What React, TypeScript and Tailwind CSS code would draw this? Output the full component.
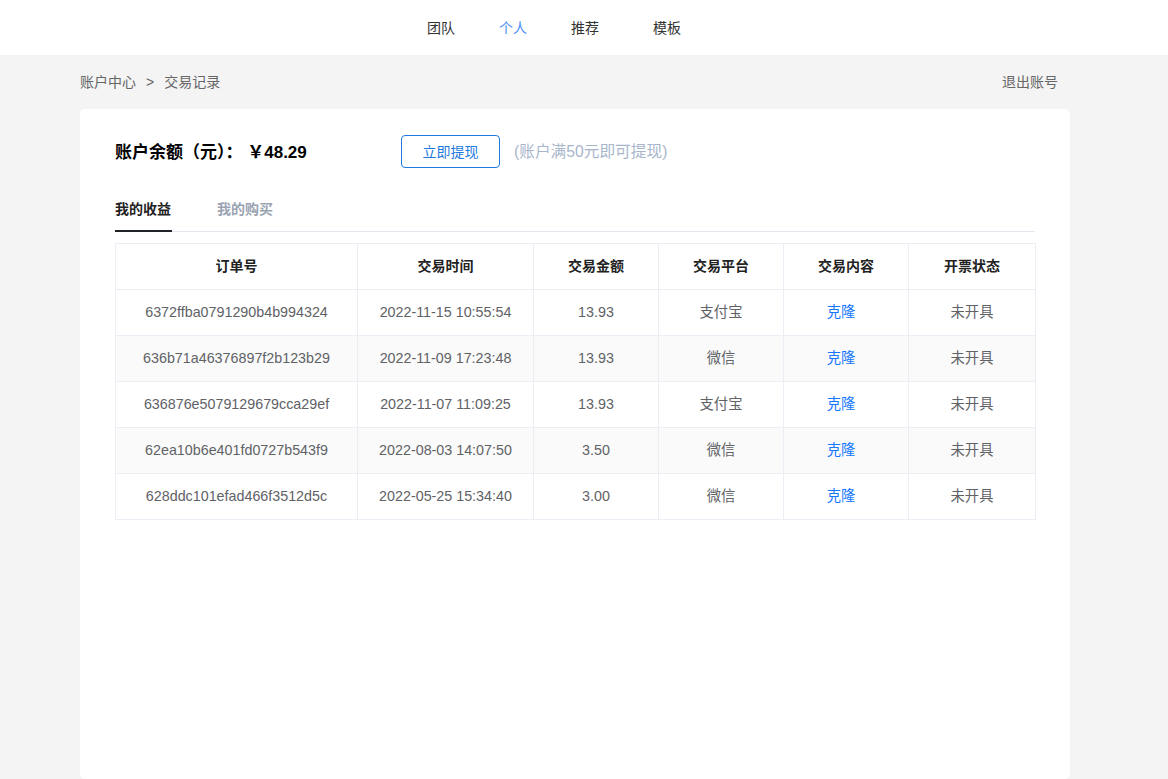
import React, { useState } from 'react';

const rows = [
  { id: '6372ffba0791290b4b994324', time: '2022-11-15 10:55:54', amount: '13.93', platform: '支付宝' },
  { id: '636b71a46376897f2b123b29', time: '2022-11-09 17:23:48', amount: '13.93', platform: '微信' },
  { id: '636876e5079129679cca29ef', time: '2022-11-07 11:09:25', amount: '13.93', platform: '支付宝' },
  { id: '62ea10b6e401fd0727b543f9', time: '2022-08-03 14:07:50', amount: '3.50', platform: '微信' },
  { id: '628ddc101efad466f3512d5c', time: '2022-05-25 15:34:40', amount: '3.00', platform: '微信' },
];

const font = { fontFamily: '"Liberation Sans", "Noto Sans CJK SC", sans-serif' };

const App = () => {
  const [tab, setTab] = useState(0);

  return (
    <div className="min-h-screen bg-[#f4f4f4] text-[#333]" style={font}>
      <header className="h-[55px] bg-white flex items-center justify-center text-sm">
        <a className="text-[#333]">团队</a>
        <a className="ml-[44px] text-[#4f8ef7]">个人</a>
        <a className="ml-[44px] text-[#333]">推荐</a>
        <a className="ml-[54px] mr-[60px] text-[#333]">模板</a>
      </header>

      <div className="mx-[80px]">
        <div className="h-[54px] flex items-center justify-between text-sm text-[#666]">
          <div className="flex items-center">
            <span>账户中心</span>
            <span className="mx-[10px]">&gt;</span>
            <span>交易记录</span>
          </div>
          <a className="mr-[30px] text-[#666]">退出账号</a>
        </div>

        <div className="w-[990px] bg-white rounded-[5px] min-h-[670px] px-[35px] pt-[26px]">
          <div className="flex items-center h-[33px]">
            <div className="w-[286px] pt-[2px] text-[17px] font-bold text-black">账户余额（元）： ￥48.29</div>
            <button className="w-[99px] h-[33px] border border-[#1f7ae0] rounded-[4px] text-sm text-[#1f7ae0] bg-white">
              立即提现
            </button>
            <span className="ml-[14px] text-[15.7px] text-[#a8b6cc]">(账户满50元即可提现)</span>
          </div>

          <div className="mt-[22px] flex border-b border-[#e4e7ed] h-[42px] text-sm font-bold">
            {['我的收益', '我的购买'].map((t, i) => (
              <button
                key={t}
                onClick={() => setTab(i)}
                className={`h-[42px] w-[57px] pb-[2px] border-b-2 -mb-px text-left ${i === 1 ? 'ml-[45px]' : ''} ${
                  tab === i ? 'border-[#1f2328] text-[#222]' : 'border-transparent text-[#9aa3b2]'
                }`}
              >
                {t}
              </button>
            ))}
          </div>

          <table className="mt-[11px] w-[920px] border-collapse text-[14.3px] table-fixed">
            <colgroup>
              <col className="w-[242px]" />
              <col className="w-[176px]" />
              <col className="w-[125px]" />
              <col className="w-[125px]" />
              <col className="w-[125px]" />
              <col className="w-[127px]" />
            </colgroup>
            <thead>
              <tr className="h-[46px] text-sm font-bold text-[#222]">
                {['订单号', '交易时间', '交易金额', '交易平台', '交易内容', '开票状态'].map((h) => (
                  <th key={h} className="border border-[#ebeef5] pb-[2px] font-bold">
                    {h}
                  </th>
                ))}
              </tr>
            </thead>
            <tbody>
              {rows.map((r, i) => (
                <tr key={r.id} className={`h-[46px] text-center text-[#606266] ${i % 2 === 1 ? 'bg-[#fafafa]' : 'bg-white'}`}>
                  <td className="border border-[#ebeef5]">{r.id}</td>
                  <td className="border border-[#ebeef5]">{r.time}</td>
                  <td className="border border-[#ebeef5]">{r.amount}</td>
                  <td className="border border-[#ebeef5]">{r.platform}</td>
                  <td className="border border-[#ebeef5] pr-[10px] text-[#1677ff]">克隆</td>
                  <td className="border border-[#ebeef5]">未开具</td>
                </tr>
              ))}
            </tbody>
          </table>
        </div>
      </div>
    </div>
  );
};

export default App;
